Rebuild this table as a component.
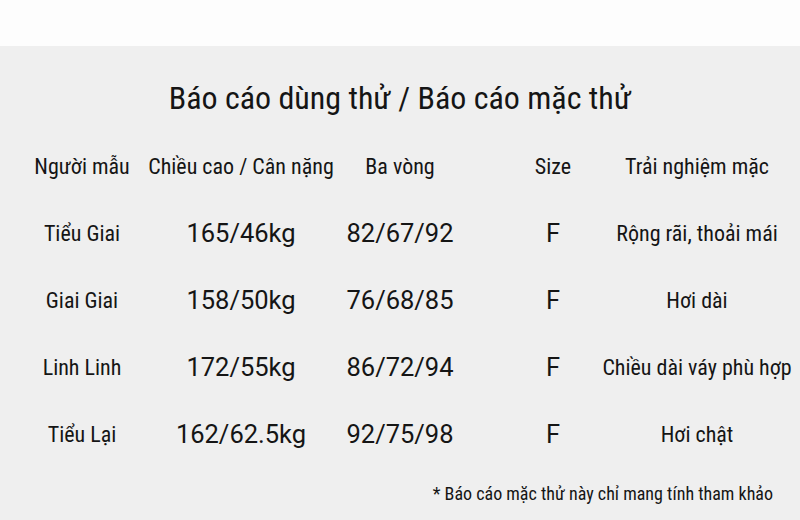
const rows = [
  { name: 'Tiểu Giai', hw: '165/46kg', bust: '82/67/92', size: 'F', note: 'Rộng rãi, thoải mái' },
  { name: 'Giai Giai', hw: '158/50kg', bust: '76/68/85', size: 'F', note: 'Hơi dài' },
  { name: 'Linh Linh', hw: '172/55kg', bust: '86/72/94', size: 'F', note: 'Chiều dài váy phù hợp' },
  { name: 'Tiểu Lại', hw: '162/62.5kg', bust: '92/75/98', size: 'F', note: 'Hơi chật' },
]

const narrow = "font-['Roboto_Condensed','Liberation_Sans_Narrow','DejaVu_Sans_Condensed',sans-serif]"
const cell = 'flex items-center justify-center whitespace-nowrap'
const cols = 'grid grid-cols-[164px_154px_164px_142px_146px]'

export default function App() {
  return (
    <div className="w-[800px] h-[520px] overflow-hidden bg-[#efefef] text-[#151515]">
      <div className="h-[46px] bg-[#fdfdfd]"></div>
      <div className={`${narrow} text-[32px] text-center leading-none pt-[36px]`}>
        Báo cáo dùng thử / Báo cáo mặc thử
      </div>
      <div className={`${cols} h-[67px] mt-[19px] text-[22px] ${narrow}`}>
        <div className={cell}>Người mẫu</div>
        <div className={cell}>Chiều cao / Cân nặng</div>
        <div className={cell}>Ba vòng</div>
        <div className={cell}>Size</div>
        <div className={cell}>Trải nghiệm mặc</div>
      </div>
      {rows.map((r) => (
        <div key={r.name} className={`${cols} h-[67px]`}>
          <div className={`${cell} ${narrow} text-[22px]`}>{r.name}</div>
          <div className={`${cell} font-['Roboto',sans-serif] text-[25.5px]`}>{r.hw}</div>
          <div className={`${cell} font-['Roboto',sans-serif] text-[25.5px]`}>{r.bust}</div>
          <div className={`${cell} font-['Roboto',sans-serif] text-[25.5px]`}>{r.size}</div>
          <div className={`${cell} ${narrow} text-[22px]`}>{r.note}</div>
        </div>
      ))}
      <div className={`${narrow} text-[18px] text-right pr-[27px] mt-[12px]`}>
        * Báo cáo mặc thử này chỉ mang tính tham khảo
      </div>
    </div>
  )
}
